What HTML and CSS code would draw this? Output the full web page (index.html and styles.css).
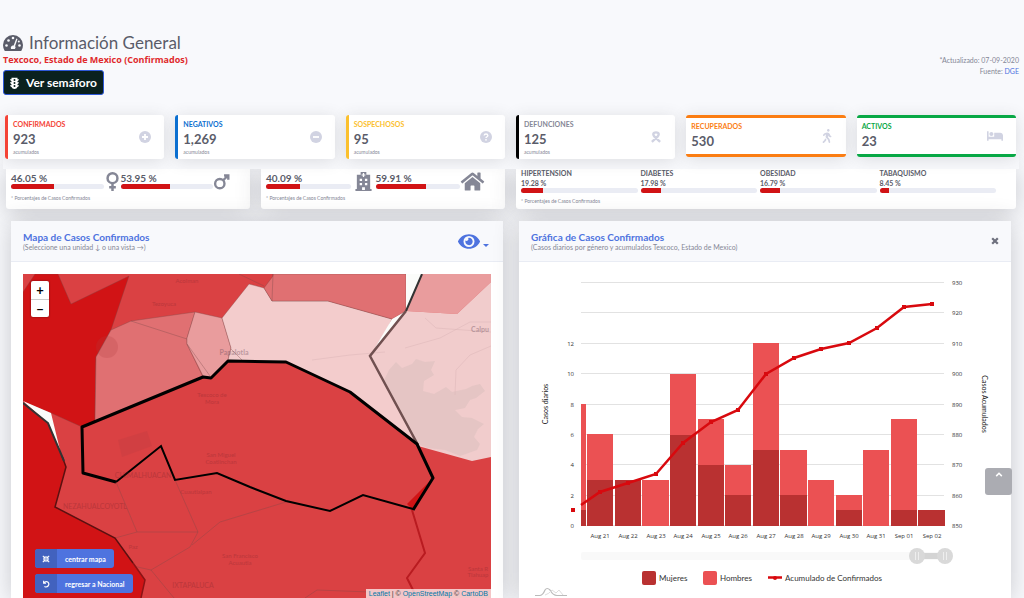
FILE: index.html
```html
<!DOCTYPE html>
<html lang="es">
<head>
  <meta charset="UTF-8">
  <title>Información General</title>
  <meta name="viewport" content="width=device-width, initial-scale=1.0">
  <link rel="stylesheet" href="styles.css">
</head>
<body id="top">
  <header class="topbar">
    <div class="heading">
      <div>
        <h1>
          <svg class="icon-title" viewBox="0 0 20 16"><path fill="currentColor" d="M10 0A10 10 0 0 0 0 10q0 3 1.500 5.400Q1.800 16 2.500 16h15q.7 0 1-.6Q20 13 20 10A10 10 0 0 0 10 0z"/><g fill="#f8f9fc"><circle cx="3.500" cy="10.500" r="1.300"/><circle cx="5.500" cy="5.500" r="1.300"/><circle cx="10" cy="3" r="1.300"/><circle cx="16.500" cy="10.500" r="1.300"/><circle cx="15.800" cy="6.500" r="1"/><path d="M13.300 3.500l1.200.4-2.400 7.200a2.300 2.300 0 0 1-.2 2.900H8.100a2.300 2.300 0 0 1 2.600-3.400z"/></g></svg>
          Información General
        </h1>
        <p class="place">Texcoco, Estado de Mexico (Confirmados)</p>
        <button class="btn-semaforo" type="button">
          <svg class="icon-light" viewBox="0 0 12 16"><path fill="currentColor" d="M2 1h8v2h2q0 1.500-2 2.500V7h2q0 1.500-2 2.500V11h2q0 1.500-2 2.300Q9 16 6 16t-4-2.700Q0 12.500 0 11h2V9.500Q0 8.500 0 7h2V5.500Q0 4.500 0 3h2z"/><g fill="#0a211f"><circle cx="6" cy="4" r="1.300"/><circle cx="6" cy="8" r="1.300"/><circle cx="6" cy="12" r="1.300"/></g></svg>
          Ver semáforo
        </button>
      </div>
      <p class="updated">*Actualizado: 07-09-2020<br>Fuente: <a href="#dge">DGE</a></p>
    </div>

    <section class="stats">
      <div class="stat stat-red">
        <div><h2>Confirmados</h2><strong>923</strong><small>acumulados</small></div>
        <svg viewBox="0 0 16 16"><circle cx="8" cy="8" r="8" fill="currentColor"/><path d="M8 4v8M4 8h8" stroke="#fff" stroke-width="2.400"/></svg>
      </div>
      <div class="stat stat-blue">
        <div><h2>Negativos</h2><strong>1,269</strong><small>acumulados</small></div>
        <svg viewBox="0 0 16 16"><circle cx="8" cy="8" r="8" fill="currentColor"/><path d="M4 8h8" stroke="#fff" stroke-width="2.400"/></svg>
      </div>
      <div class="stat stat-yellow">
        <div><h2>Sospechosos</h2><strong>95</strong><small>acumulados</small></div>
        <svg viewBox="0 0 16 16"><circle cx="8" cy="8" r="8" fill="currentColor"/><path d="M5.500 6q.3-2 2.500-2t2.500 2q0 1-1.300 1.700Q8 8.300 8 9.300" fill="none" stroke="#fff" stroke-width="1.800"/><circle cx="8" cy="11.800" r="1.200" fill="#fff"/></svg>
      </div>
      <div class="stat stat-black">
        <div><h2>Defunciones</h2><strong>125</strong><small>acumulados</small></div>
        <svg viewBox="0 0 16 16"><path d="M2.500 14.500L10 7.500Q12.500 4.500 11 2.800 8 .8 5 2.800 3.500 4.500 6 7.500l7.500 7" fill="none" stroke="currentColor" stroke-width="3.200"/></svg>
      </div>
      <div class="stat stat-orange">
        <div><h2>Recuperados</h2><strong>530</strong></div>
        <svg viewBox="0 0 320 512"><path fill="currentColor" d="M208 96c26.500 0 48-21.500 48-48S234.500 0 208 0s-48 21.500-48 48 21.500 48 48 48zm94.500 149.100l-23.300-11.800-9.700-29.400c-14.700-44.600-55.700-75.800-102.200-75.900-36-.1-55.900 10.100-93.300 25.200-21.600 8.700-39.300 25.200-49.700 46.200L17.600 213c-7.800 15.800-1.500 35 14.200 42.900 15.600 7.900 34.600 1.500 42.500-14.300L81 228c3.500-7 9.300-12.500 16.500-15.400l26.800-10.800-15.200 60.700c-5.200 20.800.4 42.900 14.900 58.800l59.900 65.400c7.200 7.900 12.300 17.400 14.900 27.700l18.300 73.300c4.300 17.100 21.700 27.600 38.800 23.300 17.100-4.300 27.600-21.700 23.300-38.800l-22.200-89c-2.600-10.300-7.700-19.900-14.900-27.700l-45.500-49.700 17.200-68.700 5.500 16.500c5.300 16.100 16.700 29.400 31.700 37l23.300 11.800c15.600 7.900 34.600 1.500 42.500-14.300 7.700-15.700 1.400-35.100-14.300-43zM73.600 385.800c-3.200 8.100-8 15.400-14.200 21.500l-50 50.100c-12.500 12.500-12.500 32.800 0 45.300s32.700 12.500 45.200 0l59.400-59.400c6.100-6.100 10.900-13.400 14.200-21.500l13.500-33.800c-55.300-60.300-38.700-41.800-47.400-53.700l-20.700 51.500z"/></svg>
      </div>
      <div class="stat stat-green">
        <div><h2>Activos</h2><strong>23</strong></div>
        <svg class="wide" viewBox="0 0 640 512"><path fill="currentColor" d="M176 256c44.110 0 80-35.890 80-80s-35.890-80-80-80-80 35.890-80 80 35.890 80 80 80zm352-128H304c-8.840 0-16 7.160-16 16v144H64V80c0-8.840-7.160-16-16-16H16C7.160 64 0 71.160 0 80v352c0 8.840 7.160 16 16 16h32c8.840 0 16-7.160 16-16v-48h512v48c0 8.840 7.160 16 16 16h32c8.840 0 16-7.160 16-16V240c0-61.860-50.140-112-112-112z"/></svg>
      </div>
    </section>
  </header>

  <section class="shares">
    <div class="share share-sex">
      <div class="metrics">
        <div class="metric"><b>46.05 %</b><div class="bar"><i style="width:46.05%"></i></div></div>
        <svg viewBox="0 0 16 20"><g fill="none" stroke="currentColor" stroke-width="2.600"><circle cx="8" cy="6.500" r="5.200"/><path d="M8 12v8M4.500 16h7"/></g></svg>
        <div class="metric"><b>53.95 %</b><div class="bar"><i style="width:53.95%"></i></div></div>
        <svg viewBox="0 0 20 20"><g fill="none" stroke="currentColor" stroke-width="2.800"><circle cx="8" cy="12.500" r="5.500"/><path d="M12 8.500l5-5M13 3h5v5"/></g></svg>
      </div>
      <p class="note">* Porcentajes de Casos Confirmados</p>
    </div>
    <div class="share share-place">
      <div class="metrics">
        <div class="metric"><b>40.09 %</b><div class="bar"><i style="width:40.09%"></i></div></div>
        <svg viewBox="0 0 18 20"><path fill="currentColor" fill-rule="evenodd" d="M6 0h6v3h4v15h1.500v2H.5v-2H2V3h4zM8.300 1v1.500H7v1.300h1.300v1.400h1.400V3.800H11V2.500H9.700V1zM5 7v2.500h2.500V7zm5.500 0v2.500H13V7zM5 11.500V14h2.500v-2.500zm5.500 0V14H13v-2.500zM7.500 16v3h3v-3z"/></svg>
        <div class="metric"><b>59.91 %</b><div class="bar"><i style="width:59.91%"></i></div></div>
        <svg viewBox="0 20 576 470"><path fill="currentColor" d="M280.370 148.260L96 300.110V464a16 16 0 0 0 16 16l112.060-.29a16 16 0 0 0 15.920-16V368a16 16 0 0 1 16-16h64a16 16 0 0 1 16 16v95.640a16 16 0 0 0 16 16.050L464 480a16 16 0 0 0 16-16V300L295.670 148.260a12.190 12.190 0 0 0-15.300 0zM571.600 251.470L488 182.560V44.050a12 12 0 0 0-12-12h-56a12 12 0 0 0-12 12v72.610L318.470 43a48 48 0 0 0-61 0L4.340 251.470a12 12 0 0 0-1.600 16.900l25.500 31A12 12 0 0 0 45.150 301l235.220-193.740a12.190 12.190 0 0 1 15.300 0L530.900 301a12 12 0 0 0 16.900-1.600l25.500-31a12 12 0 0 0-1.700-16.930z"/></svg>
      </div>
      <p class="note">* Porcentajes de Casos Confirmados</p>
    </div>
    <div class="share share-health">
      <div class="metrics">
        <div class="metric"><span>HIPERTENSION</span><b>19.28 %</b><div class="bar"><i style="width:19.28%"></i></div></div>
        <div class="metric"><span>DIABETES</span><b>17.98 %</b><div class="bar"><i style="width:17.98%"></i></div></div>
        <div class="metric"><span>OBESIDAD</span><b>16.79 %</b><div class="bar"><i style="width:16.79%"></i></div></div>
        <div class="metric"><span>TABAQUISMO</span><b>8.45 %</b><div class="bar"><i style="width:8.45%"></i></div></div>
      </div>
      <p class="note">* Porcentajes de Casos Confirmados</p>
    </div>
  </section>

  <main class="panels">
    <section class="panel">
      <div class="panel-head">
        <div>
          <h2>Mapa de Casos Confirmados</h2>
          <p>(Seleccione una unidad ↓ o una vista →)</p>
        </div>
        <button class="btn-view" type="button" aria-label="Vista">
          <svg class="icon-eye" viewBox="0 60 576 392"><path fill="currentColor" d="M572.520 241.400C518.290 135.590 410.930 64 288 64S57.680 135.640 3.480 241.410a32.350 32.350 0 0 0 0 29.190C57.710 376.410 165.070 448 288 448s230.320-71.640 284.520-177.410a32.350 32.350 0 0 0 0-29.190zM288 400a144 144 0 1 1 144-144 143.930 143.930 0 0 1-144 144zm0-240a95.310 95.310 0 0 0-25.310 3.790 47.850 47.850 0 0 1-66.900 66.900A95.780 95.780 0 1 0 288 160z"/></svg>
          <span class="caret"></span>
        </button>
      </div>
      <div class="map">
        <svg class="map-canvas" viewBox="23 274 468 324" preserveAspectRatio="xMidYMin slice">
          <rect x="23" y="274" width="468" height="324" fill="#da4143"/>
          <!-- municipios -->
          <g stroke="#7a4a4a" stroke-opacity=".45" stroke-width=".8">
            <path fill="#d11315" d="M23 292L35 274H58L71 304 129 276 111 330 96 357 95 421 82 427 51 413 23 402z"/>
            <path fill="#e07072" d="M96 357L111 330 131 321 195 312 187 338 187 344 203 377 95 421z"/>
            <path fill="#e99c9d" d="M195 312L222 318 231 348 228 360 211 378 203 376 187 344 187 338z"/>
            <path fill="#f3cccc" d="M222 318L249 284 264 288 272 301H328L392 319 388 328 370 356 418 446 350 392 286 362 228 360 231 348z"/>
            <path fill="#e07072" d="M273 274H406V311L392 319 328 301H272L264 288 273 276z"/>
            <path fill="#e99c9d" stroke="none" d="M422 274H491V282L457 314 406 311z"/>
            <path fill="#f1cccc" stroke="none" d="M406 311L457 314 491 282V457L472 461 418 446 370 356z"/>
            <path fill="none" d="M131 321L187 339M187 344L210 376M273 274L272 301M231 349L242 360M239 274L264 286M116 482L137 532H198L175 480M115 538L137 532M198 532L190 547 151 570 133 566M151 570L174 598M192 545L220 522 286 502M305 598L317 590 370 592"/>
          </g>
          <path fill="#e0c3c1" opacity=".75" d="M396 362L402 368 412 364 416 359 425 362 435 361 431 370 434 375 424 381 423 391 434 394 446 387 452 392 466 389 472 386 480 384 485 391 476 398 470 400 465 408 455 410 462 417 472 418 484 424 478 429 474 437 480 444 477 450 460 456 445 450 428 448 417 444 398 410 390 391 384 380 389 370z"/>
          <g fill="none" stroke="#dcb6b8" opacity=".5"><path d="M405 348L440 338 470 322 491 322M425 318L436 328 491 332M455 395L456 370 470 355 491 346M312 360L350 355 385 352"/></g>
          <g fill="#b23c40" opacity=".22"><path d="M118 440L147 431 152 446 122 457z"/><circle cx="107" cy="347" r="11"/></g>
          <path fill="#fbfcfa" d="M406 274H422L406 311zM392 319L406 311 370 356zM23 401L51 413 60 450 48 423z"/>
          <path fill="#d11315" d="M23 403L48 423 66 467 55 507 115 538 145 580 141 598H23zM433 478L407 504 413 510z"/>
          <path fill="none" stroke="#5b1010" stroke-width="1.500" d="M62 456L66 467 55 507 115 538 133 563"/>
          <path fill="none" stroke="#8b1416" stroke-width="1.500" d="M133 563L145 580 141 598"/>
          <path fill="none" stroke="#333" stroke-width="2" d="M23 403L48 423 64 461M422 274L406 311"/>
          <path fill="none" stroke="#705050" stroke-width="2.500" d="M406 311L370 356 418 445"/>
          <path fill="none" stroke="#b91b20" stroke-width="2" d="M412 510L425 553 407 578 414 592"/>
          <path fill="none" stroke="#000" stroke-width="2" d="M413 509L363 495 330 511 286 501 250 487 217 473 175 480 161 446 116 482"/>
          <path fill="none" stroke="#000" stroke-width="3" stroke-linejoin="round" d="M116 482L83 473 82 427 203 377 211 378 228 361 286 362 350 392 417 444 433 478 413 510"/>
          <g class="map-labels">
            <text x="187" y="283">Acolman</text><text x="164" y="306">Tezoyuca</text>
            <text x="234" y="355" class="strong">Papalotla</text>
            <text x="212" y="397">Texcoco de</text><text x="212" y="404">Mora</text>
            <text x="221" y="457">San Miguel</text><text x="221" y="464">Coatlinchan</text>
            <text x="143" y="478" class="city">CHIMALHUACAN</text><text x="196" y="494">Cuautlalpan</text>
            <text x="95" y="509" class="city">NEZAHUALCOYOTL</text><text x="133" y="549">Paz</text>
            <text x="240" y="558">San Francisco</text><text x="240" y="565">Acuautla</text>
            <text x="193" y="588" class="city">IXTAPALUCA</text>
            <text x="478" y="571">Santa R</text><text x="478" y="577">Tlahuap</text>
            <text x="480" y="332" class="strong">Calpu</text>
          </g>
        </svg>
        <div class="zoom">
          <button type="button" aria-label="Acercar">+</button>
          <button type="button" aria-label="Alejar">−</button>
        </div>
        <div class="map-actions">
          <button type="button"><span><svg viewBox="0 0 10 10"><path d="M1 1l3 3M9 1L6 4M1 9l3-3M9 9L6 6M1.500 4H4V1.500M8.500 4H6V1.500M1.500 6H4v2.500M8.500 6H6v2.500" fill="none" stroke="currentColor" stroke-width="1.300"/></svg></span>centrar mapa</button>
          <button type="button"><span><svg viewBox="0 0 10 10"><path d="M2 1v3h3M2.200 3.700Q4 1.500 6.500 2.200 9 3.200 8.500 6 7.500 9 4.500 8.700L3 8" fill="none" stroke="currentColor" stroke-width="1.400"/></svg></span>regresar a Nacional</button>
        </div>
        <p class="attribution"><a href="#leaflet">Leaflet</a> | © <a href="#osm">OpenStreetMap</a> © <a href="#carto">CartoDB</a></p>
      </div>
    </section>

    <section class="panel">
      <div class="panel-head">
        <div>
          <h2>Gráfica de Casos Confirmados</h2>
          <p>(Casos diarios por género y acumulados Texcoco, Estado de Mexico)</p>
        </div>
        <button class="btn-close" type="button" aria-label="Cerrar">
          <svg viewBox="0 0 10 10"><path d="M1.500 1.500l7 7M8.500 1.500l-7 7" stroke="currentColor" stroke-width="2.800"/></svg>
        </button>
      </div>
      <svg class="chart" viewBox="519 262 492 336" preserveAspectRatio="xMidYMin meet">
        <path stroke="#e2e2e2" d="M581 282.500H944M581 312.500H944M581 343.500H944M581 373.500H944M581 404.500H944M581 434.500H944M581 464.500H944M581 495.500H944M581 525.500H944"/>
        <!-- Hombres -->
        <path class="men" d="M581 404h5v106h-5zM587 434h26v46h-26zM642 480h27v46h-27zM670 374h26v61h-26zM698 419h26v46h-26zM725 465h26v30h-26zM753 343h26v107h-26zM780 450h27v45h-27zM808 480h26v46h-26zM836 495h26v15h-26zM863 450h26v76h-26zM891 419h26v91h-26z"/>
        <!-- Mujeres -->
        <path class="women" d="M581 510h5v16h-5zM587 480h26v46h-26zM615 480h26v46h-26zM670 435h26v91h-26zM698 465h26v61h-26zM725 495h26v31h-26zM753 450h26v76h-26zM780 495h27v31h-27zM836 510h26v16h-26zM891 510h26v16h-26zM918 510h27v16h-27z"/>
        <polyline class="total" stroke-width="2.500" points="581,505 600,492 628,483 656,474 683,443 711,422 738,410 766,374 794,358 821,349 849,343 877,328 904,307 932,304"/>
        <path class="marks" d="M571 508h4v4h-4zM598 490h4v4h-4zM626 481h4v4h-4zM654 472h4v4h-4zM681 441h4v4h-4zM709 420h4v4h-4zM736 408h4v4h-4zM764 372h4v4h-4zM792 356h4v4h-4zM819 347h4v4h-4zM847 341h4v4h-4zM875 326h4v4h-4zM902 305h4v4h-4zM930 302h4v4h-4z"/>
        <g class="axis axis-left">
          <text x="574" y="346">12</text><text x="574" y="376">10</text><text x="574" y="407">8</text><text x="574" y="437">6</text><text x="574" y="467">4</text><text x="574" y="498">2</text><text x="574" y="528">0</text>
        </g>
        <g class="axis">
          <text x="952" y="285">930</text><text x="952" y="315">920</text><text x="952" y="346">910</text><text x="952" y="376">900</text><text x="952" y="407">890</text><text x="952" y="437">880</text><text x="952" y="467">870</text><text x="952" y="498">860</text><text x="952" y="528">850</text>
        </g>
        <g class="axis axis-days">
          <text x="600" y="538">Aug 21</text><text x="628" y="538">Aug 22</text><text x="656" y="538">Aug 23</text><text x="683" y="538">Aug 24</text><text x="711" y="538">Aug 25</text><text x="738" y="538">Aug 26</text><text x="766" y="538">Aug 27</text><text x="794" y="538">Aug 28</text><text x="821" y="538">Aug 29</text><text x="849" y="538">Aug 30</text><text x="876" y="538">Aug 31</text><text x="904" y="538">Sep 01</text><text x="932" y="538">Sep 02</text>
        </g>
        <text class="axis-title" transform="translate(548 404) rotate(-90)">Casos diarios</text>
        <text class="axis-title" transform="translate(982 404) rotate(90)">Casos Acumulados</text>
        <!-- scrollbar -->
        <rect x="581" y="552" width="364" height="8" rx="2" fill="#f9f9f9"/>
        <rect x="917" y="553" width="28" height="6" fill="#d4d4d4"/>
        <g fill="#d9d9d9"><circle cx="917" cy="556" r="8"/><circle cx="945" cy="556" r="8"/></g>
        <path stroke="#eee" d="M915.500 552v8M918.500 552v8M943.500 552v8M946.500 552v8"/>
        <g class="legend">
          <rect class="women" x="642" y="571" width="14" height="14" rx="2"/><text x="659" y="581">Mujeres</text>
          <rect class="men" x="703" y="571" width="14" height="14" rx="2"/><text x="720" y="581">Hombres</text>
          <path class="total" stroke-width="2.500" d="M768 577.500H782"/><circle cx="775" cy="578" r="2" fill="#d8090e"/><text x="785" y="581">Acumulado de Confirmados</text>
        </g>
        <g fill="none" stroke="#bbb"><path stroke-width="1.200" d="M535 595.500H540Q543 595 545 590 547 587 550 590 553 595.500 557 595.500H567"/><path stroke="#ddd" d="M545 595Q549 594 552 590L556 593 559 590 563 595"/></g>
      </svg>
    </section>
  </main>

  <a class="to-top" href="#top" aria-label="Subir"><svg viewBox="0 0 10 6"><path d="M1.500 5L5 1.500 8.500 5" fill="none" stroke="currentColor" stroke-width="2"/></svg></a>
</body>
</html>
```
FILE: styles.css
```css
* {
  box-sizing: border-box;
}
body {
  display: flex;
  flex-direction: column;
  height: 100vh;
  margin: 0;
  overflow: hidden;
  background: #f8f9fc;
  color: #5a5c69;
  font-family: Lato, "Noto Sans", sans-serif;
}
h1, h2, p {
  margin: 0;
}
button {
  font-family: inherit;
  cursor: pointer;
}
a {
  color: #4e73df;
  text-decoration: none;
}
svg {
  flex: none;
}

/* barra superior */
.topbar {
  position: relative;
  z-index: 1;
  margin: 0 5px 0 3px;
  padding: 33px 0 10px;
  background: #f8f9fc;
}
.heading {
  display: flex;
  justify-content: space-between;
}
h1 {
  display: flex;
  align-items: center;
  gap: 6px;
  font-size: 17px;
  font-weight: 400;
  line-height: 20px;
}
.icon-title {
  width: 20px;
  height: 16px;
}
.place {
  color: #e02a2c;
  font-family: "Open Sans", sans-serif;
  font-size: 9px;
  font-weight: 700;
  line-height: 13px;
}
.btn-semaforo {
  display: flex;
  align-items: center;
  gap: 7px;
  height: 25px;
  margin-top: 4px;
  padding: 0 6px;
  background: #0a211f;
  border: 1px solid #2e59d9;
  border-radius: 3px;
  color: #fff;
  font-size: 12px;
  font-weight: 700;
}
.icon-light {
  width: 9px;
  height: 12px;
}
.updated {
  padding-top: 22px;
  color: #858796;
  font-size: 7px;
  line-height: 11px;
  text-align: right;
}

.stats {
  display: grid;
  grid-template-columns: repeat(6, 1fr);
  align-items: start;
  gap: 11px;
  margin: 20px 3px 0 2px;
}
.stat {
  display: flex;
  align-items: center;
  justify-content: space-between;
  height: 44px;
  padding: 0 13px 0 5px;
  background: #fff;
  border-radius: 3px;
  box-shadow: 0 2px 16px rgba(58, 59, 69, .15);
}
.stat h2 {
  font-size: 7px;
  line-height: 10px;
  text-transform: uppercase;
}
.stat strong {
  display: block;
  font-size: 13px;
  line-height: 20px;
}
.stat small {
  display: block;
  color: #858796;
  font-size: 5px;
  line-height: 6px;
}
.stat svg {
  width: 12px;
  height: 12px;
  color: #d1d3e2;
}
.stat svg.wide {
  width: 16px;
}
.stat-red { border-left: 3px solid #f44336; }
.stat-red h2 { color: #f44336; }
.stat-blue { border-left: 3px solid #0b6fd0; }
.stat-blue h2 { color: #0b6fd0; }
.stat-yellow { border-left: 3px solid #fbc02d; }
.stat-yellow h2 { color: #fbc02d; }
.stat-black { border-left: 3px solid #000; }
.stat-black h2 { color: #858796; }
.stat-orange,
.stat-green {
  height: 42px;
}
.stat-orange svg,
.stat-green svg {
  height: 14px;
}
.stat-orange { border-top: 3px solid #fb7d12; border-bottom: 3px solid #fb7d12; }
.stat-orange h2 { color: #fb7d12; }
.stat-green { border-top: 3px solid #08a845; border-bottom: 3px solid #08a845; }
.stat-green h2 { color: #08a845; }

/* porcentajes */
.shares {
  display: grid;
  grid-template-columns: 244fr 244fr 500fr;
  gap: 11px;
  margin: 0 8px 12px 6px;
}
.share {
  height: 40px;
  padding: 3px 20px 0 5px;
  background: #fff;
  border-radius: 0 0 3px 3px;
  box-shadow: 0 2px 24px rgba(58, 59, 69, .25);
}
.metrics {
  display: flex;
}
.metric {
  flex: 1;
}
.metric b,
.metric span {
  display: block;
  font-size: 10px;
  font-weight: 700;
  line-height: 12px;
}
.metrics svg {
  width: 17px;
  height: 19px;
  color: #858796;
}
.share-place .metrics svg {
  width: 25px;
}
.bar {
  height: 5px;
  overflow: hidden;
  background: #eaecf4;
  border-radius: 3px;
}
.bar i {
  display: block;
  height: 100%;
  background: #d11315;
}
.note {
  margin-top: 3px;
  color: #858796;
  font-size: 5px;
  line-height: 8px;
}
.share-health {
  padding-top: 0;
}
.share-health .metrics {
  gap: 3px;
}
.share-health .metric b,
.share-health .metric span {
  font-size: 7px;
  line-height: 10px;
}
.share-health .metric span {
  line-height: 9px;
}
.share-health .note {
  margin-top: 4px;
}

/* paneles */
.panels {
  display: grid;
  flex: 1;
  grid-template-columns: 1fr 1fr;
  gap: 16px;
  min-height: 0;
  padding: 0 13px 0 11px;
}
.panel {
  display: flex;
  flex-direction: column;
  min-height: 0;
  background: #fff;
  border-radius: 3px 3px 0 0;
  box-shadow: 0 2px 24px rgba(58, 59, 69, .25);
}
.panel-head {
  display: flex;
  align-items: center;
  justify-content: space-between;
  height: 41px;
  padding: 0 12px;
  background: #f8f9fc;
  border-bottom: 1px solid #e9ecf4;
}
.panel-head h2 {
  color: #4e73df;
  font-size: 10px;
  line-height: 12px;
}
.panel-head p {
  color: #858796;
  font-size: 7px;
  line-height: 8px;
}
.btn-view,
.btn-close {
  display: flex;
  align-items: center;
  gap: 3px;
  padding: 0 2px 0 0;
  background: none;
  border: 0;
  color: #4e73df;
}
.icon-eye {
  width: 22px;
  height: 15px;
}
.caret {
  margin-top: 8px;
  border: 3px solid transparent;
  border-top-color: #4e73df;
  border-bottom: 0;
}
.btn-close {
  padding: 0;
  color: #6e707e;
}
.btn-close svg {
  width: 8px;
  height: 8px;
}

/* mapa */
.map {
  position: relative;
  flex: 1;
  min-height: 0;
  margin: 12px 12px 0;
  overflow: hidden;
}
.map-canvas {
  display: block;
  width: 100%;
  height: 100%;
}
.map-labels {
  fill: #8c2a30;
  font-size: 6px;
  opacity: .4;
  text-anchor: middle;
}
.map-labels .city {
  font-size: 7px;
}
.map-labels .strong {
  fill: #6a4a5a;
  font-size: 7px;
  font-weight: 700;
}
.zoom {
  position: absolute;
  top: 7px;
  left: 8px;
  display: flex;
  flex-direction: column;
  background: #fff;
  border-radius: 2px;
  box-shadow: 0 0 2px rgba(0, 0, 0, .5);
}
.zoom button {
  width: 18px;
  height: 18px;
  padding: 0;
  background: none;
  border: 0;
  color: #000;
  font-size: 13px;
  font-weight: 700;
  line-height: 18px;
}
.zoom button + button {
  border-top: 1px solid #ccc;
}
.map-actions {
  position: absolute;
  bottom: 5px;
  left: 12px;
  display: flex;
  flex-direction: column;
  align-items: flex-start;
  gap: 6px;
}
.map-actions button {
  display: flex;
  align-items: center;
  gap: 8px;
  height: 19px;
  padding: 0 8px 0 0;
  overflow: hidden;
  background: #4e73df;
  border: 0;
  border-radius: 3px;
  color: #fff;
  font-size: 7px;
  font-weight: 700;
}
.map-actions span {
  display: grid;
  place-items: center;
  width: 22px;
  height: 100%;
  background: #4262be;
}
.map-actions svg {
  width: 8px;
  height: 8px;
}
.attribution {
  position: absolute;
  right: 0;
  bottom: 0;
  padding: 0 3px;
  background: rgba(255, 255, 255, .7);
  color: #333;
  font-family: "Liberation Sans", sans-serif;
  font-size: 7px;
  line-height: 9px;
}
.attribution a {
  color: #0078a8;
}

/* grafica */
.chart {
  flex: 1;
  width: 100%;
  min-height: 0;
}
.men {
  fill: #eb5153;
}
.women {
  fill: #b93131;
}
.total {
  fill: none;
  stroke: #d8090e;
}
.marks {
  fill: #d8090e;
}
.axis {
  fill: #333;
  font-family: "Open Sans", sans-serif;
  font-size: 6px;
}
.axis-left {
  text-anchor: end;
}
.axis-days,
.axis-title {
  text-anchor: middle;
}
.axis-title {
  fill: #222;
  font-size: 7px;
}
.legend text {
  fill: #333;
  font-size: 8px;
}

.to-top {
  position: fixed;
  right: 12px;
  bottom: 103px;
  width: 27px;
  height: 27px;
  background: #abacb2;
  border-radius: 3px;
  color: #fff;
  text-align: center;
}
.to-top svg {
  display: block;
  width: 8px;
  height: 5px;
  margin: 4px auto 0;
}
```
